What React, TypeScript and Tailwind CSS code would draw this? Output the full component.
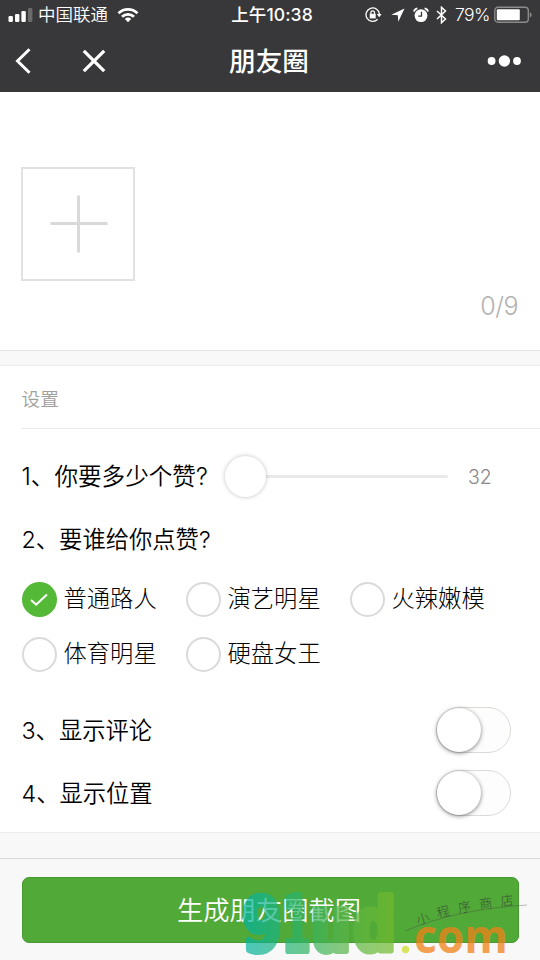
import { useState } from 'react'

interface FanGroup {
  id: string
  label: string
}

interface ToggleRowProps {
  label: string
  checked: boolean
  onToggle: () => void
}

const fanGroups: FanGroup[] = [
  { id: 'normal', label: '普通路人' },
  { id: 'star', label: '演艺明星' },
  { id: 'model', label: '火辣嫩模' },
  { id: 'sport', label: '体育明星' },
  { id: 'queen', label: '硬盘女王' },
]

function StatusBar() {
  return (
    <div className="relative flex h-[30px] items-center justify-between pl-2 pr-[7px] text-[17.5px] leading-none">
      <div className="flex items-center">
        <svg width="25" height="16" viewBox="0 0 25 16" fill="#fff">
          <rect x="0.5" y="9" width="4.4" height="6" rx="1.2" />
          <rect x="7" y="7" width="4.4" height="8" rx="1.2" />
          <rect x="13.4" y="4" width="4.4" height="11" rx="1.2" />
          <rect x="20" y="1" width="4.4" height="14" rx="1.2" opacity="0.25" />
        </svg>
        <span className="ml-[5px] font-[350]">中国联通</span>
        <svg className="ml-[9px]" width="22" height="16" viewBox="0 0 22 16" fill="none" stroke="#fff" strokeWidth="2.7">
          <path d="M1.5 6.2a13.6 13.6 0 0 1 19 0" />
          <path d="M5 9.8a8.7 8.7 0 0 1 12 0" />
          <path d="M11 15.2l-3.2-3.3a4.6 4.6 0 0 1 6.4 0z" fill="#fff" stroke="none" />
        </svg>
      </div>
      <span className="absolute left-1/2 top-[6px] ml-[2px] -translate-x-1/2 whitespace-nowrap text-[17.5px] font-medium tracking-[0.1px]">
        上午10:38
      </span>
      <div className="flex items-center">
        <svg width="17" height="16" viewBox="0 0 17 16" fill="none" stroke="#fff" strokeWidth="1.3">
          <path d="M12.6 12.3A6.7 6.7 0 1 1 14.4 7" />
          <path d="M11.8 7h4.8l-2.4 3.2z" fill="#fff" stroke="none" />
          <rect x="4.7" y="6.8" width="6" height="4.6" fill="#fff" stroke="none" />
          <path d="M5.9 7.4V5.6a1.8 1.8 0 0 1 3.6 0v1.8" />
        </svg>
        <svg className="ml-[9px]" width="14" height="14" viewBox="0 0 15 15" fill="#fff">
          <path d="M14.5 0.5L0.3 7.2l7 0.5 0.5 7z" />
        </svg>
        <svg className="ml-[8px]" width="16" height="16" viewBox="0 0 16 16" fill="none">
          <circle cx="8" cy="8.6" r="6.4" fill="#fff" />
          <path d="M8.5 4.8v4.3H5.2" stroke="#38383a" strokeWidth="1.3" />
          <path d="M1 4.6A4 4 0 0 1 4.4 1.4M11.6 1.4A4 4 0 0 1 15 4.6" stroke="#fff" strokeWidth="1.7" />
        </svg>
        <svg className="ml-[7px]" width="11" height="18" viewBox="0 0 11 18" fill="none" stroke="#fff" strokeWidth="1.5">
          <path d="M1 5l8.5 8-4 3.7V1.3l4 3.7L1 13" />
        </svg>
        <span className="ml-[8px] text-[17.5px] font-light tracking-[-0.5px]">79%</span>
        <svg className="ml-[4px]" width="39" height="18" viewBox="0 0 39 18">
          <rect x="0.8" y="1.3" width="33.5" height="15" rx="3.2" fill="none" stroke="#8b8b8c" strokeWidth="1.4" />
          <rect x="2.8" y="3.3" width="23" height="11" rx="1" fill="#fff" />
          <path d="M35.8 6.2c2.4 0.8 2.4 4.4 0 5.2z" fill="#8b8b8c" />
        </svg>
      </div>
    </div>
  )
}

function NavBar() {
  return (
    <div className="relative flex h-[62px] items-center justify-between pl-[15px] pr-[19px]">
      <div className="flex items-center">
        <svg width="17" height="26" viewBox="0 0 17 26" fill="none" stroke="#fff" strokeWidth="3">
          <path d="M14.5 1.2L2.5 13l12 11.8" />
        </svg>
        <svg className="ml-[50px]" width="24" height="24" viewBox="0 0 24 24" fill="none" stroke="#fff" strokeWidth="3.2">
          <path d="M1.8 1.8l20.4 20.4M22.2 1.8L1.8 22.2" />
        </svg>
      </div>
      <h1 className="absolute left-1/2 top-[18px] ml-[-1px] -translate-x-1/2 text-[26.6px] font-medium leading-[27px]">朋友圈</h1>
      <svg width="34" height="12" viewBox="0 0 34 12" fill="#fff">
        <circle cx="4.6" cy="6" r="3.9" />
        <circle cx="17.4" cy="6" r="5.7" />
        <circle cx="30" cy="6" r="3.9" />
      </svg>
    </div>
  )
}

function FanOption({ group, checked, onSelect }: { group: FanGroup; checked: boolean; onSelect: () => void }) {
  return (
    <button className="flex h-[55px] items-center text-left" onClick={onSelect}>
      {checked ? (
        <span className="flex size-[35px] items-center justify-center rounded-full bg-[#53b936]">
          <svg width="18" height="14" viewBox="0 0 18 14" fill="none" stroke="#fff" strokeWidth="2">
            <path d="M1 7l5.2 4.6L17 1.6" />
          </svg>
        </span>
      ) : (
        <span className="size-[35px] rounded-full border-2 border-[#dadada]" />
      )}
      <span className="-mt-px ml-[7px] text-[23.3px] font-light leading-none">{group.label}</span>
    </button>
  )
}

function ToggleRow({ label, checked, onToggle }: ToggleRowProps) {
  return (
    <div className="flex h-[63px] items-center justify-between pr-[29px]">
      <span className="pt-[3px] text-[23.3px] leading-none">{label}</span>
      <button
        role="switch"
        aria-checked={checked}
        onClick={onToggle}
        className="flex h-[46px] w-[75px] rounded-full border-[1.5px] border-[#d8dcd7] bg-[#fdfdfd]"
      >
        <span className="size-[44px] rounded-full bg-white shadow-[0_1px_4px_rgba(0,0,0,0.5)]" />
      </button>
    </div>
  )
}

function Watermark() {
  return (
    <svg className="pointer-events-none absolute bottom-0 right-0" width="310" height="100" viewBox="230 860 310 100">
      <defs>
        <linearGradient id="mark" gradientUnits="userSpaceOnUse" x1="243" y1="0" x2="394" y2="0">
          <stop offset="0" stopColor="#00b3a4" />
          <stop offset="0.35" stopColor="#28b46c" />
          <stop offset="0.65" stopColor="#55b44b" />
          <stop offset="1" stopColor="#74bb2b" />
        </linearGradient>
      </defs>
      <g
        opacity="0.7"
        fill="url(#mark)"
        stroke="url(#mark)"
        strokeWidth="6"
        strokeLinejoin="round"
        fontFamily="'DejaVu Sans Mono', monospace"
        fontWeight="700"
      >
        <text x="242" y="950.5" fontSize="75" textLength="40" lengthAdjust="spacingAndGlyphs">9</text>
        <text x="283" y="951" fontSize="76" textLength="27" lengthAdjust="spacingAndGlyphs">1</text>
        <text x="310" y="950.5" fontSize="77" textLength="42" lengthAdjust="spacingAndGlyphs">u</text>
        <text x="353" y="950.5" fontSize="73" textLength="43" lengthAdjust="spacingAndGlyphs">d</text>
      </g>
      <g fontFamily="'Open Sans', sans-serif" fontWeight="700" fontSize="47" opacity="0.75">
        <circle cx="405.5" cy="949.5" r="3.7" fill="#cfdf30" />
        <text x="414" y="953" textLength="94" lengthAdjust="spacingAndGlyphs" fill="#f18218">com</text>
      </g>
      <path d="M405 931C440 916 480 908 527 905" fill="none" stroke="#444" strokeWidth="0.8" opacity="0.45" />
      <g fontFamily="'Noto Sans CJK SC', sans-serif" fontWeight="300" fontSize="13" fill="#333" opacity="0.7">
        <text transform="translate(418 925) rotate(-16)">小</text>
        <text transform="translate(438 918) rotate(-14)">程</text>
        <text transform="translate(459 913) rotate(-11)">序</text>
        <text transform="translate(480 909) rotate(-8)">商</text>
        <text transform="translate(501 906) rotate(-6)">店</text>
      </g>
    </svg>
  )
}

export default function App() {
  const [selected, setSelected] = useState<string>('normal')
  const [showComments, setShowComments] = useState(false)
  const [showLocation, setShowLocation] = useState(false)

  return (
    <div className="relative flex h-[960px] w-[540px] flex-col overflow-hidden bg-[#f8f8f8] font-[Inter,'Noto_Sans_CJK_SC',sans-serif] text-black">
      <header className="h-[92px] shrink-0 bg-[#38383a] text-white">
        <StatusBar />
        <NavBar />
      </header>

      <section className="flex h-[259px] shrink-0 flex-col border-b border-[#e3e3e3] bg-white px-[22px] pt-[75px]">
        <button className="-ml-px flex size-[114px] items-center justify-center border-2 border-[#e2e2e2]">
          <svg className="ml-px" width="58" height="58" viewBox="0 0 58 58" stroke="#d9d9d9" strokeWidth="3">
            <path d="M0.5 28.5h57M28.5 0.5v57" />
          </svg>
        </button>
        <span className="mt-[10px] self-end text-[25px] font-[350] leading-[30px] tracking-[-0.5px] text-[#b2b2b2]">0/9</span>
      </section>

      <section className="mt-[14px] flex h-[468px] shrink-0 flex-col border-y border-[#ececec] bg-white pl-[21.5px] font-[350]">
        <h2 className="flex h-[63px] items-center border-b border-[#e8e8e8] pt-[7px] text-[18.7px] leading-none text-[#a0a0a0]">设置</h2>

        <div className="mt-4 flex h-[64px] items-center">
          <span className="w-[203.5px] whitespace-nowrap text-[23.6px] leading-none">1、你要多少个赞?</span>
          <div className="relative -mt-[2px] flex h-[41px] w-[223px] items-center">
            <span className="h-[3px] w-full rounded-full bg-[#e9e9e9]" />
            <span className="absolute left-0 top-0 size-[41px] rounded-full bg-white shadow-[0_0_4px_rgba(0,0,0,0.25)]" />
          </div>
          <span className="ml-[20px] pt-px text-[19.5px] text-[#888]">32</span>
        </div>

        <div className="flex h-[60px] items-center pt-px text-[23.3px] leading-none">2、要谁给你点赞?</div>

        <div className="mt-[3px] grid grid-cols-[164px_164px_164px]">
          {fanGroups.map((group) => (
            <FanOption
              key={group.id}
              group={group}
              checked={selected === group.id}
              onSelect={() => setSelected(group.id)}
            />
          ))}
        </div>

        <div className="mt-[16px]">
          <ToggleRow label="3、显示评论" checked={showComments} onToggle={() => setShowComments(!showComments)} />
          <ToggleRow label="4、显示位置" checked={showLocation} onToggle={() => setShowLocation(!showLocation)} />
        </div>
      </section>

      <footer className="mt-auto h-[102px] shrink-0 border-t border-[#d9d9d9] px-[21.5px] pt-[18px]">
        <button className="h-[66px] w-full rounded-[7px] border border-[#469a30] bg-[#51a938] pr-[2px] pt-[2px] text-[26.3px] font-[350] leading-none text-white">
          生成朋友圈截图
        </button>
      </footer>
      <Watermark />
    </div>
  )
}
